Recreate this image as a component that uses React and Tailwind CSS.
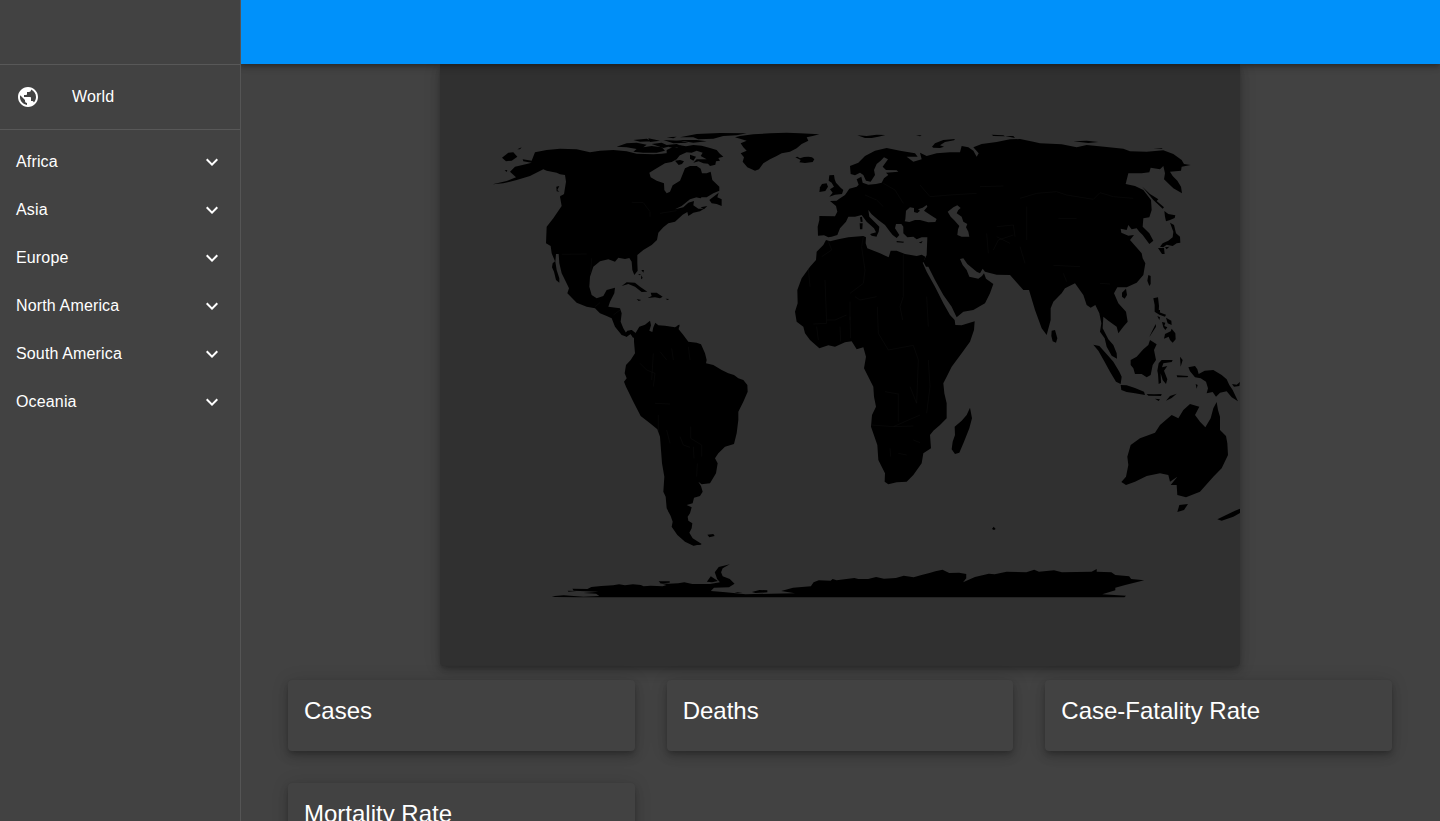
import React from "react";

const regions = ["Africa", "Asia", "Europe", "North America", "South America", "Oceania"];
const stats = ["Cases", "Deaths", "Case-Fatality Rate", "Mortality Rate"];

const americaNorth = [
  // mainland
  "M155 122L165 97 200 90 240 86 290 88 330 97 360 92 400 90 440 94 470 101 520 103 545 101 570 98 590 92 612 90 600 105 590 118 575 126 555 130 530 145 508 158 512 172 530 182 552 190 553 210 560 220 570 215 578 196 600 182 607 165 615 145 630 138 650 138 662 146 666 160 680 160 692 155 697 180 718 200 718 212 700 220 680 232 650 232 630 238 605 258 585 268 610 262 625 248 642 243 640 256 655 266 672 266 660 274 640 278 625 288 622 276 608 284 585 305 565 310 550 322 535 338 531 360 515 375 490 390 472 405 472 430 473 452 463 465 457 450 455 425 448 414 435 417 415 413 405 425 385 418 360 424 340 440 330 470 328 500 335 525 350 535 370 528 380 510 405 503 403 520 390 545 385 560 420 565 425 580 422 605 430 625 438 638 455 630 468 640 460 655 450 640 440 650 425 645 405 620 395 595 380 588 360 580 345 565 320 560 290 548 262 520 267 505 255 480 245 460 238 430 236 402 228 402 226 425 230 450 238 475 238 488 228 480 222 455 216 442 218 430 225 424 215 400 212 378 198 370 200 320 220 295 245 258 240 230 252 222 258 185 255 165 240 163 230 158 200 152 190 148 175 155 150 168 110 180 70 190 38 193 80 183 108 172 90 155 105 140 140 132 155 128 130 124 128 118z",
  // western tip of Alaska and nearby islands
  "M66 113L85 98 100 97 112 110 95 122 78 124z",
  "M74 151L82 150 80 156zM112 88L125 82 120 88zM229 200L238 198 232 210 238 215 230 214zM240 228L250 226 262 242 258 252 248 238z",
  // arctic archipelago
  "M410 80L440 70 470 68 500 74 490 82 515 78 545 82 555 92 530 98 490 98 460 95 470 87 440 82z",
  "M460 60L500 56 515 64 480 65zM505 55L540 62 510 66zM515 72L545 68 560 75 590 72 610 80 580 84 565 80 550 84zM550 60L600 62 625 68 580 70zM560 52L590 50 580 55z",
  "M600 52L650 42 720 39 800 40 770 46 730 48 700 56 655 58 640 52zM590 60L650 60 680 64 640 68z",
  "M590 85L600 76 618 79 640 75 665 77 690 84 710 90 718 100 730 110 715 114 720 122 708 124 706 134 690 138 684 131 670 130 656 124 640 128 650 118 680 118 662 108 668 98 650 92 635 98 620 97 600 106 578 98zM560 90L580 80 596 86 585 100 560 100zM585 122L600 120 612 124 606 132 596 135zM630 104L648 110 640 122 630 116z",
  // Newfoundland
  "M688 240L716 218 712 232 725 238 725 258 710 252 695 250z",
  "M648 232L665 230 662 235zM662 262L682 258 672 268z",
  // Caribbean
  "M425 498L440 487 465 488 480 500 502 515 485 516 465 500 445 492z",
  "M512 518L530 518 548 530 540 535 525 532 503 534 515 528zM470 537L484 540 476 543zM557 536L568 537 562 540zM474 463L482 462 480 466zM484 450L492 450 490 458zM484 466L488 474 483 478z",
];

const americaSouth = [
  // mainland, joined to Panama
  "M72 75L82 62 95 60 105 72 118 50 135 44 150 32 153 46 148 62 157 66 160 52 166 38 175 46 195 47 225 52 238 44 236 58 250 75 265 95 290 98 303 103 315 130 320 150 318 160 340 165 365 180 385 190 402 195 415 205 430 210 442 225 443 245 430 275 415 305 415 330 410 370 402 402 375 410 355 430 345 445 353 460 348 490 330 520 305 523 295 515 303 528 308 545 300 558 282 563 278 580 260 585 275 592 270 610 263 620 265 632 277 640 275 655 268 668 278 685 305 702 280 707 255 695 232 675 215 650 218 635 212 618 200 595 197 560 190 545 193 500 186 460 180 380 172 358 150 340 122 318 100 275 78 230 72 215 80 205 74 190 78 165 92 150 105 130 102 95 102 80 92 72 80 80z",
  "M322 674L340 672 344 678 328 682zM246 682L290 696 305 704 280 706zM232 46L238 44 238 52z",
  "M205 590L212 605 214 615 206 606z",
];

const greenlandEurope = [
  // Greenland
  "M-120 48L-80 43 -30 40 20 38 60 40 118 43 98 48 80 52 85 62 65 72 50 85 30 95 5 100 -10 108 -30 118 -50 130 -63 148 -75 152 -98 142 -112 125 -108 112 -118 100 -100 92 -110 82 -118 70 -100 62 -135 52z",
  // Iceland
  "M46 112L52 110 60 115 72 111 85 110 96 112 103 118 98 126 75 129 58 127 62 120z",
  // Britain and Ireland
  "M148 166L162 165 164 178 168 188 182 203 190 210 186 222 165 224 148 230 158 218 150 208 162 200 155 188 146 182z",
  "M126 192L140 190 144 200 136 213 118 216 120 202z",
  // Svalbard and Novaya Zemlya
  "M232 46L260 48 290 44 316 45 295 50 275 54 255 54zM408 46L425 46 420 49z",
  "M456 80L465 70 490 60 525 57 522 61 495 66 480 76 492 80 480 84 460 83z",
  "M635 44L670 46 675 49 640 48zM676 48L700 48 705 54zM880 64L920 62 955 66 925 69zM1120 87L1145 85 1148 87z",
];

const eurasia = [
  "M118 288L165 289 172 275 168 258 150 243 170 242 178 236 195 225 208 206 230 200 236 194 230 178 244 170 248 188 265 194 288 192 305 188 312 175 325 165 318 158 355 155 350 151 318 150 308 140 324 118 312 112 302 122 290 132 282 150 285 165 272 185 258 182 250 165 240 158 225 166 212 162 210 138 235 128 255 108 285 92 320 84 360 92 405 100 413 110 380 110 400 125 425 118 420 98 440 108 470 100 510 97 540 97 545 78 565 82 580 92 590 110 596 100 580 82 605 72 650 66 690 58 720 57 760 65 780 70 845 73 890 82 920 75 980 81 1030 86 1050 94 1100 95 1150 91 1180 102 1205 120 1212 132 1232 135 1205 140 1203 152 1170 155 1178 168 1192 182 1203 200 1206 220 1180 205 1152 178 1155 160 1150 138 1140 148 1112 143 1108 157 1085 160 1045 160 1037 192 1065 198 1090 210 1113 240 1115 270 1108 292 1090 295 1088 320 1108 340 1120 362 1108 372 1088 345 1078 335 1070 325 1055 328 1045 315 1040 330 1022 326 1024 338 1045 347 1062 345 1050 360 1085 400 1088 415 1096 430 1090 465 1070 488 1040 502 1012 502 1002 520 1015 550 1038 575 1043 605 1030 620 1015 640 1010 620 985 602 970 590 968 625 985 658 1000 675 1010 700 1011 716 995 707 980 680 974 655 960 635 964 610 958 580 946 555 932 563 920 555 910 525 885 490 855 505 845 520 820 545 812 565 812 600 800 645 785 625 765 570 747 510 730 510 712 490 690 465 650 464 615 455 608 446 600 460 590 455 562 432 550 415 540 417 548 435 560 450 568 470 595 476 606 468 612 460 618 476 640 492 630 520 615 550 580 570 550 575 530 592 522 575 515 560 490 525 465 480 445 440 438 440 430 425 440 405 442 352 425 352 410 358 400 350 382 352 370 340 370 320 364 312 348 312 345 325 358 345 350 354 338 345 330 335 315 315 295 300 275 283 265 270 268 290 298 320 296 335 290 348 272 342 288 337 282 325 260 305 245 285 225 290 205 290 198 305 180 325 172 345 155 350 145 352 132 346 114 347 113 320 118 300z",
  // Mediterranean islands
  "M240 292L246 290 248 305 242 306zM239 310L248 310 247 328 240 328zM270 342L290 340 290 350 275 347zM350 363L372 365 370 368 350 367zM416 368L428 363 424 370z",
  // Sri Lanka, Taiwan, Hainan
  "M815 632L825 630 832 655 828 668 818 664 814 648zM1105 465L1112 468 1112 492 1108 498 1102 482zM1026 518L1038 506 1041 525 1034 536 1026 530z",
  // Sakhalin, Kurils and Japan
  "M1087 200L1110 222 1135 238 1130 243 1152 262 1148 266 1120 240z",
  "M1153 273L1165 282 1186 286 1184 294 1170 300 1158 304 1155 290zM1170 308L1182 315 1188 340 1200 350 1201 368 1190 370 1178 378 1160 374 1150 382 1140 380 1148 370 1165 362 1178 352 1180 335zM1134 384L1152 384 1154 402 1146 402zM1155 382L1168 380 1160 388z",
  // Philippines
  "M1120 535L1134 532 1137 558 1136 576 1158 584 1155 590 1138 584 1124 575 1124 555zM1132 588L1140 592 1138 600zM1158 593L1174 602 1175 615 1163 610zM1146 606L1156 608 1153 618 1162 622 1156 630 1150 622zM1127 612L1128 620 1110 648 1108 650z",
  "M1155 642L1172 634 1175 626 1186 640 1187 658 1178 668 1170 660 1166 650 1152 656z",
];

const innerSeas = [
  // Black Sea and Azov
  "M376 298L378 272 390 262 402 264 402 276 412 279 420 272 414 268 428 263 440 255 442 260 432 272 450 284 470 297 466 306 445 307 420 300 405 300 388 306 374 304z",
  // Caspian Sea
  "M503 275L520 262 532 256 542 264 535 270 530 280 545 290 550 305 562 312 558 322 565 335 568 350 545 350 532 345 534 328 538 318 522 300 512 290z",
];

const africa = [
  "M138 360L150 364 175 358 205 352 250 348 258 352 257 370 262 385 300 400 326 412 332 392 350 392 375 402 410 408 425 404 436 410 432 425 428 428 440 455 465 500 490 550 510 585 524 600 526 615 545 616 584 604 582 630 570 665 545 700 515 740 500 770 490 790 493 820 500 850 500 895 480 915 460 932 450 945 453 985 430 1000 425 1030 400 1065 380 1085 350 1087 325 1093 314 1085 315 1060 295 1020 292 975 273 920 276 885 288 860 282 830 280 800 252 745 258 710 250 682 230 688 215 664 195 667 165 680 145 676 118 685 90 660 75 640 70 620 50 605 45 575 53 550 52 510 65 475 90 440 108 420 110 395 130 375z",
  "M570 863L576 895 568 925 552 965 538 998 525 1002 515 988 518 965 525 945 524 920 545 902 560 885zM636 1227L641 1220 647 1227 642 1230z",
];

const oceania = [
  // Sumatra and Java
  "M40 104L58 108 85 138 100 155 118 185 125 200 122 222 108 215 90 185 72 152 55 122zM122 225L140 226 165 234 192 245 195 255 165 250 140 246 124 240z",
  // Borneo
  "M152 150L170 140 190 118 205 105 210 90 230 103 222 120 228 150 218 165 212 195 200 202 185 192 165 192 160 175 152 165z",
  // Sulawesi and Moluccas
  "M236 160L245 150 278 150 275 156 250 160 246 172 262 168 252 182 262 208 258 222 248 210 242 190 243 218 236 222 234 192 232 182zM300 140L308 150 302 170zM290 196L325 198 322 202 292 202zM347 222L353 225 350 236z",
  "M200 252L222 253 245 252 243 258 205 257zM225 266L240 268 236 273zM258 272L270 258 290 251 275 264z",
  // New Guinea
  "M325 172L345 168 352 178 356 192 374 182 400 180 425 195 440 208 448 225 458 240 474 274 455 262 440 244 420 248 408 260 398 246 380 250 384 235 378 215 362 205 345 202 330 184zM456 222L470 224 480 216 478 228 462 230z",
  "M225 0L240 0 240 8 228 7z",
  // Australia
  "M410 276L414 300 420 320 420 360 438 378 442 400 444 435 425 475 400 500 360 545 318 562 292 555 290 525 272 525 292 500 270 515 265 495 240 490 200 498 165 515 138 525 124 516 138 500 145 465 142 440 152 405 180 385 225 368 240 345 275 315 295 325 310 300 330 282 358 290 345 315 360 335 376 352 392 325 400 295z",
  "M298 585L324 582 312 600 292 606z",
  // New Zealand
  "M412 628L440 614 465 602 486 594 486 606 460 620 425 632z",
];

const antarctica = [
  "M30 124L60 121 110 125 150 123 142 116 110 114 148 110 85 107 82 101 120 102 130 96 155 93 185 91 200 88 215 91 235 88 255 90 262 94 280 92 310 94 320 90 302 84 325 86 350 85 365 82 385 87 430 87 455 82 448 72 442 52 452 36 480 28 462 40 458 52 462 64 480 72 492 86 478 97 440 98 432 108 470 112 520 118 585 116 645 115 610 108 640 98 685 94 692 82 705 76 735 77 740 72 750 76 770 73 795 69 805 72 830 72 850 66 870 71 900 69 920 62 945 67 965 60 985 54 1000 49 1018 44 1035 54 1060 53 1078 57 1078 70 1070 82 1100 66 1135 56 1150 58 1180 50 1230 52 1250 44 1262 50 1300 46 1320 52 1395 50 1408 42 1408 50 1445 52 1455 60 1490 64 1495 72 1528 76 1480 90 1455 98 1455 106 1422 118 1482 122 1478 127 900 127 100 127 38 126z",
  "M300 79L328 79 328 83 305 85zM422 80L432 64 450 78 435 82zM536 111L555 105 575 106 575 112 545 114zM70 107L92 108 72 110zM492 112L512 112 500 114z",
];

const Shapes = ({ at, sx = 1 / 3, paths, className }) => (
  <g transform={`translate(${at[0]} ${at[1]}) scale(${sx} ${1 / 3})`} className={className}>
    {paths.map((d) => (
      <path key={d} d={d} />
    ))}
  </g>
);

const borders = [
  "M145 364L155 390 125 410M250 350L245 380 255 450 250 490 210 520M370 403L370 530M85 445L90 500M135 480L140 610 100 612M210 545L210 600M370 530L360 560 368 600M440 530L445 620M292 560L295 640 325 690M225 530L240 540 290 530M140 600L165 600 200 585M110 620L115 660M180 620L182 665M210 590L212 655M325 690L400 676 415 720 410 850M355 820L355 905M315 815L355 822M275 915L340 920 400 918M330 985L332 1010M400 960L420 968M445 720L450 800 440 880M340 920L420 885M355 1000L380 1005M390 800L410 850",
  "M600 200L670 198M720 235L770 220 830 215 860 225 940 238 960 218 1000 230 1060 235M740 260L740 360M835 295L890 296M650 350L690 370M640 390L655 360 700 345M650 320L700 315 705 350M720 380L735 430M820 436L900 440M850 460L860 485M960 490L990 492M420 195L450 230 510 225 590 220M255 225L290 240 310 260M310 190L345 210 370 250M620 340L625 400",
];
const americanBorders = [
  "M455 247L490 248 510 275 510 290M540 280L590 272M245 403L320 402M335 415L332 460M345 560L360 548M400 585L420 570",
];
const southBorders = [
  "M120 160L140 180 165 190 160 230M180 125L200 150M215 115L220 150M265 110L270 150M165 280L210 282M175 315L175 365M272 350L272 385 305 405 305 440M240 380L250 405 270 412M280 410L282 445M292 460L290 500M200 360L210 400M160 130L155 210",
];

const Icon = ({ d }) => (
  <svg viewBox="0 0 24 24" className="size-6 shrink-0 fill-white">
    <path d={d} />
  </svg>
);

function WorldMap() {
  return (
    <svg viewBox="440 65 800 600" className="block h-[600px] w-[800px] fill-black">
      <Shapes at={[480, 120]} paths={americaNorth} />
      <Shapes at={[600, 310]} paths={americaSouth} />
      <Shapes at={[780, 120]} paths={greenlandEurope} />
      <Shapes at={[780, 120]} paths={eurasia} />
      <Shapes at={[780, 120]} paths={innerSeas} className="fill-[#303030]" />
      <Shapes at={[780, 120]} paths={africa} />
      <Shapes at={[1080, 310]} paths={oceania} />
      <Shapes at={[540, 555]} sx={0.3954} paths={antarctica} />
      <Shapes at={[780, 120]} paths={borders} className="fill-none stroke-[#141414] stroke-1" />
      <Shapes at={[480, 120]} paths={americanBorders} className="fill-none stroke-[#141414] stroke-1" />
      <Shapes at={[600, 310]} paths={southBorders} className="fill-none stroke-[#141414] stroke-1" />
    </svg>
  );
}

export default function App() {
  return (
    <div className="flex h-[821px] overflow-hidden bg-[#424242] font-['Liberation_Sans',Arial,sans-serif] text-white">
      <aside className="relative z-20 -mr-px w-[241px] shrink-0 border-r border-[#555555] bg-[#424242]">
        <div className="h-16" />
        <div className="border-y border-[#585858] py-2">
          <div className="flex h-12 items-center px-4 text-base tracking-[0.00938em]">
            <span className="w-14">
              <Icon d="M12 2C6.48 2 2 6.48 2 12s4.48 10 10 10 10-4.48 10-10S17.52 2 12 2zm-1 17.93c-3.95-.49-7-3.85-7-7.93 0-.62.08-1.21.21-1.79L9 15v1c0 1.1.9 2 2 2v1.93zm6.9-2.54c-.26-.81-1-1.39-1.9-1.39h-1v-3c0-.55-.45-1-1-1H8v-2h2c.55 0 1-.45 1-1V7h2c1.1 0 2-.9 2-2v-.41c2.93 1.19 5 4.06 5 7.41 0 2.08-.8 3.97-2.1 5.39z" />
            </span>
            <span>World</span>
          </div>
        </div>
        <nav className="py-2">
          {regions.map((name) => (
            <div key={name} className="flex h-12 items-center justify-between px-4 text-base tracking-[0.00938em]">
              <span>{name}</span>
              <Icon d="M16.59 8.59L12 13.17 7.41 8.59 6 10l6 6 6-6z" />
            </div>
          ))}
        </nav>
      </aside>
      <div className="flex min-w-0 flex-1 flex-col">
        <header className="relative z-10 h-16 shrink-0 bg-[#0091fa] shadow-[0_2px_4px_-1px_rgba(0,0,0,0.2),0_4px_5px_rgba(0,0,0,0.14),0_1px_10px_rgba(0,0,0,0.12)]" />
        <main className="min-h-0 flex-1 overflow-hidden px-12">
          <div className="mx-auto h-[602px] w-[800px] rounded-b bg-[#303030] pt-px shadow-[0_3px_5px_-1px_rgba(0,0,0,0.2),0_6px_10px_rgba(0,0,0,0.14),0_1px_18px_rgba(0,0,0,0.12)]">
            <WorldMap />
          </div>
          <div className="mt-3.5 grid grid-cols-3 gap-8">
            {stats.map((name) => (
              <section
                key={name}
                className="h-[71px] rounded bg-[#424242] px-4 pt-[15px] shadow-[0_3px_5px_-1px_rgba(0,0,0,0.2),0_6px_10px_rgba(0,0,0,0.14),0_1px_18px_rgba(0,0,0,0.12)]"
              >
                <h2 className="text-2xl leading-8">{name}</h2>
              </section>
            ))}
          </div>
        </main>
      </div>
    </div>
  );
}
